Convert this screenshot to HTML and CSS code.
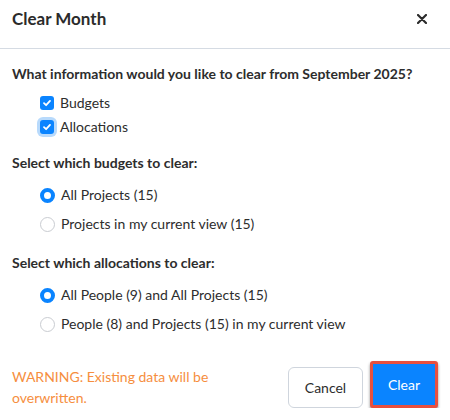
FILE: index.html
```html
<!DOCTYPE html>
<html lang="en">
<head>
    <meta charset="UTF-8">
    <meta name="viewport" content="width=device-width, initial-scale=1.0">
    <title>Clear Month</title>
    <link rel="stylesheet" href="styles.css">
</head>
<body>

<div class="modal">
    <div class="modal-header">
        <div class="modal-title">Clear Month</div>
        <button class="close-btn" aria-label="Close">
            <svg width="10" height="10" viewBox="0 0 10 10">
                <path d="M1 1 L9 9 M9 1 L1 9" stroke="#2b2b2b" stroke-width="2.2" stroke-linecap="round"/>
            </svg>
        </button>
    </div>

    <div class="modal-body">
        <div class="question">What information would you like to clear from September 2025?</div>
        <div class="options checks">
            <label class="option">
                <span class="checkbox">
                    <svg width="10" height="10" viewBox="0 0 10 10"><path d="M2 5.2 L4.1 7.2 L8 2.9" fill="none" stroke="#fff" stroke-width="1.8" stroke-linecap="round" stroke-linejoin="round"/></svg>
                </span>
                Budgets
            </label>
            <label class="option">
                <span class="checkbox focused">
                    <svg width="10" height="10" viewBox="0 0 10 10"><path d="M2 5.2 L4.1 7.2 L8 2.9" fill="none" stroke="#fff" stroke-width="1.8" stroke-linecap="round" stroke-linejoin="round"/></svg>
                </span>
                Allocations
            </label>
        </div>

        <div class="question section">Select which budgets to clear:</div>
        <div class="options radios">
            <label class="option"><span class="radio checked"></span>All Projects (15)</label>
            <label class="option"><span class="radio"></span>Projects in my current view (15)</label>
        </div>

        <div class="question section last">Select which allocations to clear:</div>
        <div class="options radios">
            <label class="option"><span class="radio checked"></span>All People (9) and All Projects (15)</label>
            <label class="option"><span class="radio"></span>People (8) and Projects (15) in my current view</label>
        </div>

        <div class="modal-footer">
            <div class="warning">WARNING: Existing data will be overwritten.</div>
            <div class="actions">
                <button class="btn btn-cancel">Cancel</button>
                <button class="btn btn-clear">Clear</button>
            </div>
        </div>
    </div>
</div>

</body>
</html>
```

FILE: styles.css
```css
body {
    margin: 0;
    background-color: #fff;
    color: #2d2d2d;
    font-family: Lato, "Open Sans", sans-serif;
    font-size: 14px;
    line-height: 20px;
}
.modal {
    width: 450px;
}
.modal-header {
    display: flex;
    justify-content: space-between;
    align-items: flex-start;
    height: 40px;
    padding: 9px 23px 0 12px;
    border-bottom: 1px solid #d5dbe3;
    box-sizing: content-box;
    height: 39px;
}
.modal-title {
    font-size: 17px;
    font-weight: bold;
    line-height: 20px;
    color: #2b2b2b;
}
.close-btn {
    border: none;
    background: none;
    padding: 0;
    margin-top: 5px;
    width: 10px;
    height: 10px;
    display: flex;
}
.modal-body {
    padding: 15px 12px 0;
}
.question {
    font-weight: bold;
}
.question.section {
    margin-top: 16px;
}
.question.last {
    margin-top: 19px;
}
.options {
    display: flex;
    flex-direction: column;
    margin-left: 28px;
}
.checks {
    margin-top: 9px;
    gap: 4px;
}
.radios {
    margin-top: 12px;
    gap: 9px;
}
.option {
    display: flex;
    align-items: center;
    height: 20px;
}
.checkbox {
    width: 14px;
    height: 14px;
    border-radius: 3px;
    background-color: #0a84ff;
    margin-right: 6px;
    display: flex;
    align-items: center;
    justify-content: center;
}
.checkbox.focused {
    box-shadow: 0 0 0 3px #b8dafc;
}
.radio {
    width: 15px;
    height: 15px;
    box-sizing: border-box;
    border-radius: 50%;
    border: 1px solid #c9ccd1;
    margin-right: 6px;
    background: #fff;
}
.radio.checked {
    border: 4.5px solid #0a84ff;
}
.modal-footer {
    display: flex;
    justify-content: space-between;
    align-items: flex-end;
    margin-top: 27px;
}
.warning {
    width: 220px;
    color: #f68e3e;
    line-height: 21px;
}
.actions {
    display: flex;
    align-items: flex-end;
}
.btn {
    font-family: Lato, "Open Sans", sans-serif;
    font-size: 14px;
    height: 41px;
    border-radius: 6px;
    cursor: pointer;
}
.btn-cancel {
    background: #fff;
    border: 1px solid #cfd5dd;
    color: #2d2d2d;
    width: 75px;
    padding: 0;
}
.btn-clear {
    box-sizing: content-box;
    background: #0a84ff;
    color: #fff;
    border: 3px solid #e8503f;
    border-radius: 3px;
    width: 62px;
    padding: 0;
    margin-left: 7px;
    box-shadow: 0 2px 3px rgba(0, 0, 0, 0.45);
}
```
